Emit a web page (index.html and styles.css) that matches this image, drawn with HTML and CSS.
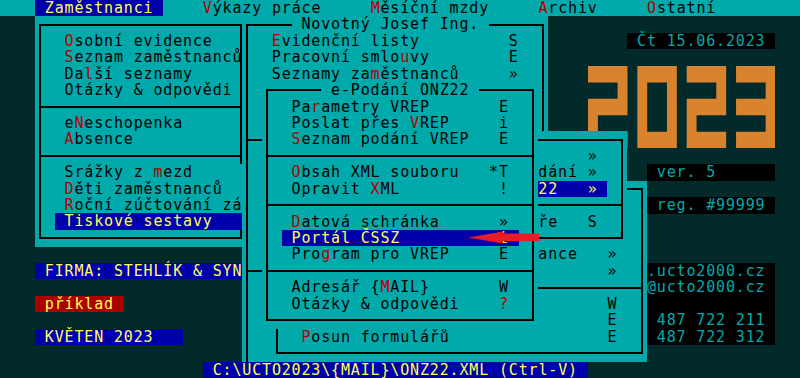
FILE: index.html
```html
<!DOCTYPE html>
<html lang="cs">
<head>
    <meta charset="UTF-8">
    <meta name="viewport" content="width=device-width, initial-scale=1.0">
    <title>UCTO 2023 - Zaměstnanci</title>
    <link rel="stylesheet" href="styles.css">
</head>
<body>
<div class="screen">
    <div class="menubar"><span class="sel"> Zaměstnanci </span>    <span class="k">V</span>ýkazy práce     <span class="k">M</span>ěsíční mzdy     <span class="k">A</span>rchiv     <span class="k">O</span>statní</div>

    <div class="desk">
        <div class="labels">
            <div class="ln"><span class="tag blue"> FIRMA: STEHLÍK &amp; SYN</span></div>
            <div class="ln"></div>
            <div class="ln"><span class="tag red"> příklad </span></div>
            <div class="ln"></div>
            <div class="ln"><span class="tag blue"> KVĚTEN 2023   </span></div>
        </div>

        <div class="info">
            <div class="box date ln"> Čt 15.06.2023</div>
            <svg class="year" viewBox="0 0 19 5" preserveAspectRatio="none">
                <path d="M0 0H4V3H1V4H4V5H0V2H3V1H0Z"/>
                <path fill-rule="evenodd" d="M5 0H9V5H5Z M6 1V4H8V1Z"/>
                <path d="M10 0H14V3H11V4H14V5H10V2H13V1H10Z"/>
                <path d="M15 0H19V5H15V4H18V3H15V2H18V1H15Z"/>
            </svg>
            <div class="box small ln"> ver. 5</div>
            <div class="box small ln"> reg. #99999</div>
            <div class="box small contacts">
                <div class="ln">.ucto2000.cz</div>
                <div class="ln">@ucto2000.cz</div>
                <div class="ln"></div>
                <div class="ln"> 487 722 211</div>
                <div class="ln"> 487 722 312</div>
            </div>
        </div>
    </div>

    <div class="statusbar"><span> C:\UCTO2023\{MAIL}\ONZ22.XML (Ctrl-V) </span></div>

    <!-- Zaměstnanci -->
    <div class="win w1">
        <div class="frame">
            <div class="ln">  <span class="k">O</span>sobní evidence</div>
            <div class="ln">  <span class="k">S</span>eznam zaměstnanců</div>
            <div class="ln">  Da<span class="k">l</span>ší seznamy</div>
            <div class="ln">  Otázky &amp; odpovědi</div>
            <div class="sep"></div>
            <div class="ln">  e<span class="k">N</span>eschopenka</div>
            <div class="ln">  <span class="k">A</span>bsence</div>
            <div class="sep"></div>
            <div class="ln open">  Srážky z <span class="k">m</span>ezd</div>
            <div class="ln open">  <span class="k">D</span>ěti zaměstnanců</div>
            <div class="ln open">  <span class="k">R</span>oční zúčtování zá</div>
            <div class="ln open sel"> Tiskové sestavy</div>
        </div>
    </div>

    <!-- Novotný Josef Ing. -->
    <div class="win w2">
        <div class="frame">
            <span class="title"> Novotný Josef Ing. </span>
            <div class="ln">  <span class="k">E</span>videnční listy         S</div>
            <div class="ln">  Pracovní smlo<span class="k">u</span>vy        E</div>
            <div class="ln">  Seznamy za<span class="k">m</span>ěstnanců     »</div>
            <div class="ln"></div>
            <div class="ln"></div>
            <div class="ln"></div>
            <div class="sep"></div>
            <div class="ln"></div>
            <div class="ln"></div>
            <div class="ln"></div>
            <div class="ln"></div>
            <div class="ln"></div>
            <div class="ln"></div>
            <div class="ln"></div>
            <div class="sep"></div>
            <div class="ln"></div>
            <div class="ln"></div>
            <div class="ln"></div>
            <div class="ln"></div>
            <div class="ln"></div>
        </div>
    </div>

    <!-- lower menu -->
    <div class="win w6">
        <div class="frame">
            <div class="ln"></div>
            <div class="ln"></div>
            <div class="ln"></div>
            <div class="ln far">ance   »</div>
            <div class="ln far">       »</div>
            <div class="sep"></div>
            <div class="ln far">       W</div>
            <div class="ln far">       E</div>
            <div class="ln">  <span class="k">P</span>osun formulářů                E</div>
        </div>
    </div>

    <!-- e-Podání list -->
    <div class="win w4">
        <div class="frame">
            <div class="ln">     »</div>
            <div class="ln">dání »</div>
            <div class="ln sel">22   »</div>
            <div class="sep"></div>
            <div class="ln">ře   S</div>
        </div>
    </div>

    <!-- e-Podání ONZ22 -->
    <div class="win w3">
        <div class="frame">
            <span class="title"> e-Podání ONZ22 </span>
            <div class="ln">  Pa<span class="k">r</span>ametry VREP       E</div>
            <div class="ln">  Poslat přes <span class="k">V</span>REP     i</div>
            <div class="ln">  <span class="k">S</span>eznam podání VREP   E</div>
            <div class="sep"></div>
            <div class="ln">  <span class="k">O</span>bsah XML souboru   *T</div>
            <div class="ln">  Opravit <span class="k">X</span>ML          !</div>
            <div class="sep"></div>
            <div class="ln">  <span class="k">D</span>atová schránka      »</div>
            <div class="ln sel"> Portál ČSSZ          i</div>
            <div class="ln">  Pro<span class="k">g</span>ram pro VREP     E</div>
            <div class="sep"></div>
            <div class="ln">  Adresář {<span class="k">M</span>AIL}       W</div>
            <div class="ln">  Otázky &amp; odpovědi    <span class="k">?</span></div>
        </div>
    </div>

    <svg class="arrow" viewBox="0 0 75 16">
        <polygon points="2,8.5 37,2.5 37,4.5 73,4.5 73,12 37,12 37,14.5"/>
    </svg>
</div>
</body>
</html>
```

FILE: styles.css
```css
:root {
    --w: 9.87px;
    --h: 16.435px;
    --x0: 35px;
    --cyan: #00aaaa;
    --bg: #022a2a;
    --blue: #0000aa;
    --yellow: #ffff55;
    --red: #b00000;
    --orange: #d8832e;
}

* { box-sizing: border-box; }

html, body { margin: 0; background: var(--bg); }

.screen {
    position: relative;
    width: 800px;
    height: 378px;
    overflow: hidden;
    display: flex;
    flex-direction: column;
    font-family: "DejaVu Sans Mono", monospace;
    font-size: 15px;
    letter-spacing: 0.84px;
    color: #000;
}

.ln { height: var(--h); line-height: var(--h); white-space: pre; }
.k { color: var(--red); }
.sel { background: var(--blue); color: var(--yellow); }

/* top menu */
.menubar {
    height: var(--h);
    line-height: var(--h);
    padding-left: var(--x0);
    background: var(--cyan);
    white-space: pre;
}
.menubar .sel { display: inline-block; height: var(--h); }

/* desktop background */
.desk { display: flex; height: calc(var(--h) * 21); padding-left: var(--x0); }
.labels { width: calc(var(--w) * 52); padding-top: calc(var(--h) * 15); }
.tag { display: inline-block; height: var(--h); color: var(--yellow); }
.tag.blue { background: var(--blue); }
.tag.red { background: #aa0000; }

.info { padding-top: var(--h); }
.box { background: #000; color: var(--cyan); }
.box.date { width: calc(var(--w) * 15); margin-left: calc(var(--w) * 8); }
.box.small { width: calc(var(--w) * 13); margin-left: calc(var(--w) * 10); margin-top: var(--h); }
.box.contacts { margin-top: calc(var(--h) * 3); }
.year {
    display: block;
    width: calc(var(--w) * 19);
    height: calc(var(--h) * 5);
    margin: var(--h) 0 0 calc(var(--w) * 4);
    fill: var(--orange);
}

.statusbar {
    position: relative;
    z-index: 2;
    height: var(--h);
    line-height: var(--h);
    padding-left: calc(var(--x0) + var(--w) * 17);
    white-space: pre;
}
.statusbar span { display: inline-block; height: var(--h); background: var(--blue); color: var(--yellow); }

/* windows */
.win {
    position: absolute;
    background: var(--cyan);
    padding: calc(var(--h) / 2 - 1px) calc(var(--w) / 2 - 1px);
}
.frame {
    position: relative;
    height: 100%;
    border: 2px solid #000;
    padding: calc(var(--h) / 2 - 1px) calc(var(--w) / 2 - 1px);
}
.frame .sel { margin: 0 var(--w); }
.sep { position: relative; height: var(--h); margin: 0 calc(1px - var(--w) / 2); }
.sep::before {
    content: "";
    position: absolute;
    left: 0;
    right: 0;
    top: calc(50% - 1px);
    border-top: 2px solid #000;
}
.title {
    position: absolute;
    top: calc(var(--h) / -2 - 1px);
    left: calc(var(--w) * var(--tc) - var(--w) / 2 - 1px);
    line-height: var(--h);
    background: var(--cyan);
    white-space: pre;
}

.w1 { left: var(--x0); top: var(--h); width: calc(var(--w) * 21.5 - 1px); height: calc(var(--h) * 14); }
.w1 .open { margin-right: calc(-1px - var(--w) / 2); background: var(--cyan); }
.w1 .open.sel { background: var(--blue); }

.w2 { --tc: 5; left: calc(var(--x0) + var(--w) * 21); top: var(--h); width: calc(var(--w) * 31); height: calc(var(--h) * 22); }

.w6 { left: calc(var(--x0) + var(--w) * 24); top: calc(var(--h) * 11); width: calc(var(--w) * 38); height: calc(var(--h) * 11); }
.w6 .far { padding-left: calc(var(--w) * 26); }

.w4 { left: calc(var(--x0) + var(--w) * 36); top: calc(var(--h) * 8); width: calc(var(--w) * 24); height: calc(var(--h) * 7); }
.w4 .ln { padding-left: calc(var(--w) * 14); }
.w4 .ln.sel { padding-left: calc(var(--w) * 13); }

.w3 { --tc: 6; left: calc(var(--x0) + var(--w) * 23); top: calc(var(--h) * 5); width: calc(var(--w) * 28); height: calc(var(--h) * 15); }

.arrow {
    position: absolute;
    left: 466px;
    top: 229px;
    width: 75px;
    height: 16px;
    z-index: 3;
    fill: #e81c24;
}
```
